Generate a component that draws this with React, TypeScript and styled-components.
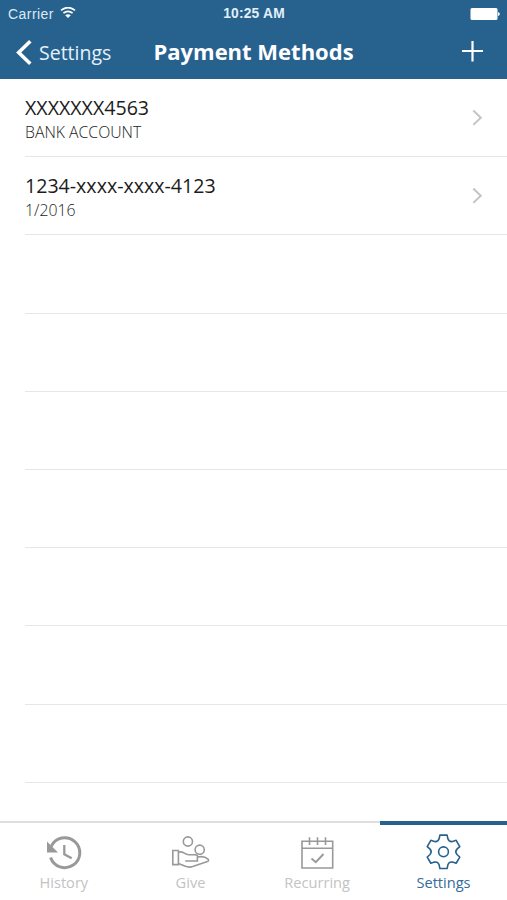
import React from "react";
import styled, { createGlobalStyle } from "styled-components";

const Global = createGlobalStyle`
  * { box-sizing: border-box; }
  body { margin: 0; background: #fff; }
  svg { display: block; }
`;

const Screen = styled.div`
  width: 507px;
  height: 900px;
  display: flex;
  flex-direction: column;
  overflow: hidden;
  background: #fff;
  font-family: "Open Sans", sans-serif;
`;

const Header = styled.header`
  height: 79px;
  flex: none;
  background: #27628f;
  color: #fff;
`;

const StatusBar = styled.div`
  height: 28px;
  display: grid;
  grid-template-columns: 1fr auto 1fr;
  align-items: center;
  padding: 0 7px 0 8px;
  font-family: "Liberation Sans", sans-serif;
  font-size: 14px;
  line-height: 28px;
`;

const Carrier = styled.div`
  display: flex;
  align-items: center;
  gap: 6px;
  color: #dce9f4;
  letter-spacing: 0.45px;
`;

const Clock = styled.div`
  font-weight: bold;
  font-size: 13.8px;
  letter-spacing: 0.2px;
  color: #e3eff9;
`;

const Battery = styled.div`
  justify-self: end;
`;

const NavBar = styled.div`
  height: 50px;
  display: grid;
  grid-template-columns: 1fr auto 1fr;
  align-items: center;
  padding: 0 16px;
`;

const BackButton = styled.div`
  display: flex;
  align-items: center;
  gap: 7px;
  font-size: 19.5px;
  line-height: 26px;
  color: #e4f1fb;
`;

const Title = styled.h1`
  margin: 0;
  font-size: 22px;
  line-height: 28px;
  font-weight: 700;
  padding-bottom: 5px;
`;

const AddButton = styled.div`
  justify-self: end;
  margin-right: 7px;
`;

const List = styled.div`
  flex: 1;
  min-height: 0;
  overflow: hidden;
  padding-left: 25px;
`;

const Row = styled.div`
  height: 78.2px;
  display: flex;
  align-items: center;
  justify-content: space-between;
  padding-right: 24px;
  border-bottom: 1px solid #e6e6e6;
`;

const Name = styled.div`
  padding-top: 4px;
  font-size: 19.6px;
  line-height: 26px;
  color: #1c1c1c;
`;

const Detail = styled.div`
  font-size: 15.8px;
  line-height: 23px;
  font-weight: 300;
  color: #222;
`;

const TabBar = styled.nav`
  height: 79px;
  flex: none;
  display: grid;
  grid-template-columns: 380px 127px;
  background: #fff;
`;

const TabGroup = styled.div`
  display: grid;
  grid-template-columns: repeat(3, 1fr);
  border-top: 2px solid #dedede;
`;

const Tab = styled.div<{ $active?: boolean }>`
  display: flex;
  flex-direction: column;
  align-items: center;
  padding-top: ${(p) => (p.$active ? 9 : 10)}px;
  padding-left: ${(p) => (p.$active ? 0 : 1)}px;
  border-top: ${(p) => (p.$active ? "4px solid #27628f" : "none")};
  color: ${(p) => (p.$active ? "#27628f" : "#999")};
`;

const TabLabel = styled.div<{ $active?: boolean }>`
  margin-top: ${(p) => (p.$active ? 0 : 1)}px;
  font-size: 14.6px;
  line-height: 20px;
  color: ${(p) => (p.$active ? "#356b98" : "#c3c3c3")};
`;

const TabIcon = styled.svg`
  width: 40px;
  height: 38px;
  overflow: visible;
  fill: none;
  stroke: currentColor;
  stroke-width: 1.6;
`;

const gearPath = (() => {
  const at = (turn: number, x: number, y: number) => {
    const a = (turn * Math.PI) / 3;
    const px = x * Math.cos(a) - y * Math.sin(a);
    const py = x * Math.sin(a) + y * Math.cos(a);
    return `${px.toFixed(2)} ${py.toFixed(2)}`;
  };
  let d = `M${at(0, -4.4, -13)}`;
  for (let i = 0; i < 6; i++) {
    d += `L${at(i, -3.6, -16.7)}L${at(i, 3.6, -16.7)}L${at(i, 4.4, -13)}`;
    d += `C${at(i, 5.1, -11)} ${at(i + 1, -5.1, -11)} ${at(i + 1, -4.4, -13)}`;
  }
  return d + "Z";
})();

const methods = [
  { name: "XXXXXXX4563", detail: "BANK ACCOUNT" },
  { name: "1234-xxxx-xxxx-4123", detail: "1/2016" },
];

const emptyRows = 7;

export default function App() {
  return (
    <Screen>
      <Global />
      <Header>
        <StatusBar>
          <Carrier>
            Carrier
            <svg width="16" height="14" viewBox="0 1 16 14" fill="none" stroke="#fff" strokeWidth="1.7">
              <path d="M1 4.4Q8-1.2 15 4.4" />
              <path d="M3.4 7.2Q8 3.4 12.6 7.2" />
              <path d="M5.2 9.3Q8 7.1 10.8 9.3L8 12.1Z" fill="#fff" stroke="none" />
            </svg>
          </Carrier>
          <Clock>10:25 AM</Clock>
          <Battery>
            <svg width="30" height="12" viewBox="0 0 30 12" fill="#fff">
              <rect x="0.5" y="0" width="27" height="12" rx="1.5" />
              <path d="M28 4Q29.8 4.3 29.8 6T28 8Z" />
            </svg>
          </Battery>
        </StatusBar>
        <NavBar>
          <BackButton>
            <svg width="16" height="26" viewBox="0 0 16 26" fill="none" stroke="#fff" strokeWidth="3.6">
              <path d="M14.3 1.3L2.7 12.5L14.3 23.7" />
            </svg>
            Settings
          </BackButton>
          <Title>Payment Methods</Title>
          <AddButton>
            <svg width="23" height="24" viewBox="0 0 23 24" stroke="#fff" strokeWidth="2.2">
              <path d="M1 10H22M11.5 -0.5V20.5" />
            </svg>
          </AddButton>
        </NavBar>
      </Header>
      <List>
        {methods.map((m) => (
          <Row key={m.name}>
            <div>
              <Name>{m.name}</Name>
              <Detail>{m.detail}</Detail>
            </div>
            <svg width="11" height="16" viewBox="0 0 11 16" fill="none" stroke="#c4c4c4" strokeWidth="2">
              <path d="M1.3 0.5L8.8 7.7L1.3 14.9" />
            </svg>
          </Row>
        ))}
        {Array.from({ length: emptyRows }, (_, i) => (
          <Row key={i} />
        ))}
      </List>
      <TabBar>
        <TabGroup>
          <Tab>
            <TabIcon viewBox="0 0 40 38">
              <path d="M7.2 13.4A15 15 0 1 1 6.6 24.5" strokeWidth="3" />
              <path d="M3 8.5V19.5H14Z" fill="currentColor" stroke="none" />
              <path d="M20.3 12V21.2L27.7 25.2" strokeWidth="2.3" />
            </TabIcon>
            <TabLabel>History</TabLabel>
          </Tab>
          <Tab>
            <TabIcon viewBox="-0.7 0 40 38">
              <circle cx="17.2" cy="8.5" r="4.6" />
              <circle cx="29" cy="16.7" r="4.6" />
              <path d="M2.1 17.5H7.7V31.6H2.1Z" />
              <path d="M7.7 19.2C12.5 17.4 13.5 21.7 18 21.8H24.5Q26.9 22 27 24Q33.5 22.7 37.3 26.1Q38.9 28 36 28.8L22 33.6Q18 34.8 14 33L7.7 30.6M14.5 28H26.7V24" />
            </TabIcon>
            <TabLabel>Give</TabLabel>
          </Tab>
          <Tab>
            <TabIcon viewBox="-0.5 0 40 38">
              <path d="M4.5 8.2H35.2V35H4.5ZM4.5 15.3H35.2M12 4.2V12M20 4.2V12M28 4.2V12" />
              <path d="M14 25.5L18.3 29.2L26 21" strokeWidth="1.9" />
            </TabIcon>
            <TabLabel>Recurring</TabLabel>
          </Tab>
        </TabGroup>
        <Tab $active>
          <TabIcon viewBox="-19.5 -17.8 40 38" strokeLinejoin="round">
            <path d={gearPath} />
            <circle r="4.9" />
          </TabIcon>
          <TabLabel $active>Settings</TabLabel>
        </Tab>
      </TabBar>
    </Screen>
  );
}
